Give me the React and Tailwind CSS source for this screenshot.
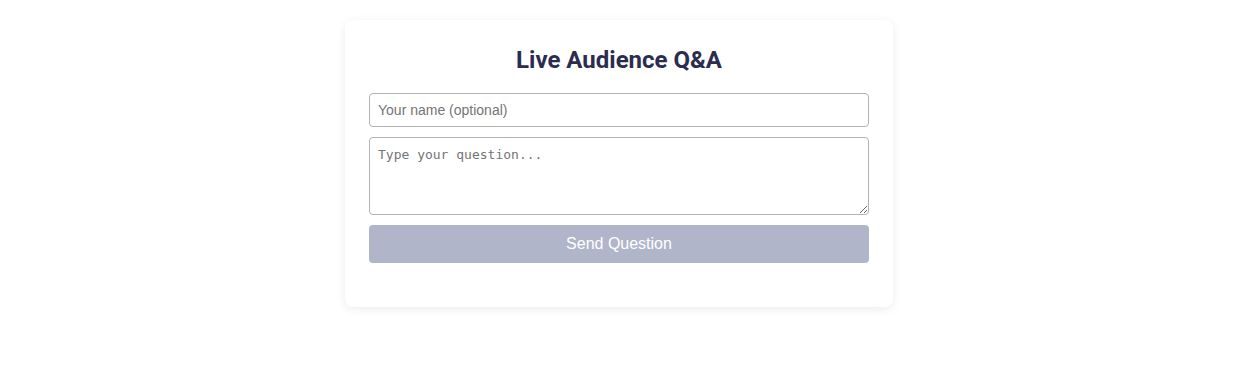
import React from "react";

export default function App() {
    return (
        <div className="min-h-[367px] bg-white pt-5 flex justify-center" style={{ fontFamily: "Arial, 'Liberation Sans', sans-serif" }}>
            <div className="w-[548px] h-[287px] bg-white rounded-lg shadow-[0_2px_10px_rgba(0,0,0,0.08)] px-6 pt-6 flex flex-col">
                <h2 className="text-[24px] leading-[30px] pt-px font-bold text-center text-[#2a2d4f] mb-[18px]" style={{ fontFamily: "Roboto, sans-serif" }}>
                    Live Audience Q&amp;A
                </h2>

                <input
                    type="text"
                    placeholder="Your name (optional)"
                    className="w-full h-[34px] px-2 border border-[#b3b3b3] rounded text-[14px] text-[#333] placeholder:text-[#757575] outline-none"
                />

                <textarea
                    placeholder="Type your question..."
                    className="w-full h-[78px] mt-2.5 px-2 pt-[9px] pb-2 border border-[#b3b3b3] rounded text-[13px] leading-[16px] text-[#333] placeholder:text-[#757575] outline-none"
                    style={{ fontFamily: "'DejaVu Sans Mono', 'Liberation Mono', monospace" }}
                />

                <button
                    disabled
                    className="w-full h-[38px] mt-2.5 bg-[#b0b5ca] text-white text-[16px] rounded"
                >
                    Send Question
                </button>
            </div>
        </div>
    );
}
